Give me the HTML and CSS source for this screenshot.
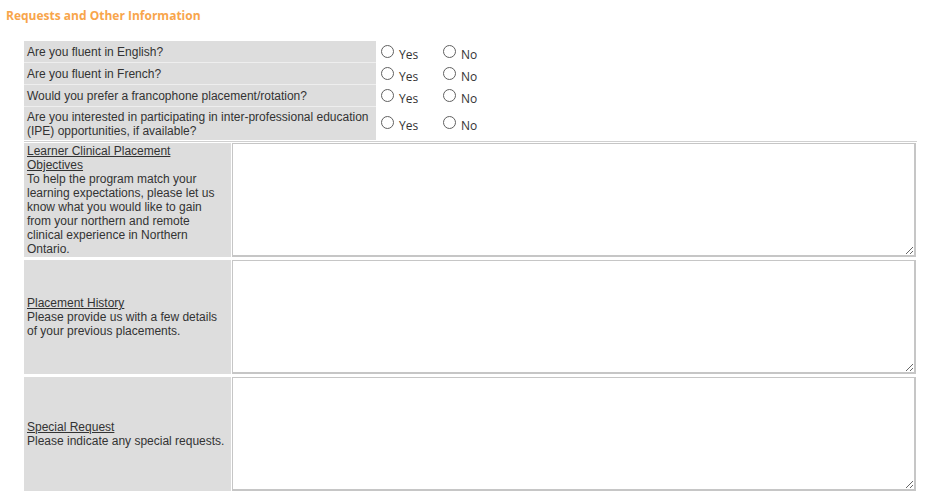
FILE: index.html
```html
<!DOCTYPE html>
<html>
<head>
<meta charset="utf-8">
<link rel="stylesheet" href="styles.css">
</head>
<body>
<h2 class="section-title">Requests and Other Information</h2>
<div class="questions">
  <div class="q-label">Are you fluent in English?</div>
  <div class="q-answer"><span class="opt"><span class="radio"></span>Yes</span><span class="opt"><span class="radio"></span>No</span></div>
  <div class="q-label">Are you fluent in French?</div>
  <div class="q-answer"><span class="opt"><span class="radio"></span>Yes</span><span class="opt"><span class="radio"></span>No</span></div>
  <div class="q-label">Would you prefer a francophone placement/rotation?</div>
  <div class="q-answer"><span class="opt"><span class="radio"></span>Yes</span><span class="opt"><span class="radio"></span>No</span></div>
  <div class="q-label tall">Are you interested in participating in inter-professional education (IPE) opportunities, if available?</div>
  <div class="q-answer tall"><span class="opt"><span class="radio"></span>Yes</span><span class="opt"><span class="radio"></span>No</span></div>
</div>
<div class="texts">
  <div class="t-label"><div><span class="u">Learner Clinical Placement Objectives</span><br>To help the program match your learning expectations, please let us know what you would like to gain from your northern and remote clinical experience in Northern Ontario.</div></div>
  <div class="t-field"><textarea></textarea></div>
  <div class="t-label"><div><span class="u">Placement History</span><br>Please provide us with a few details of your previous placements.</div></div>
  <div class="t-field"><textarea></textarea></div>
  <div class="t-label"><div><span class="u">Special Request</span><br>Please indicate any special requests.</div></div>
  <div class="t-field"><textarea></textarea></div>
</div>
</body>
</html>
```

FILE: styles.css
```css
html, body {
  margin: 0;
  padding: 0;
  background: #fff;
}
body {
  font-family: "Liberation Sans", Arial, sans-serif;
  font-size: 12px;
  color: #333;
}
.section-title {
  margin: 0;
  padding: 8px 0 0 6px;
  height: 33px;
  box-sizing: border-box;
  font-family: "Open Sans", sans-serif;
  font-size: 12px;
  font-weight: 700;
  color: #f8a54b;
  line-height: 16px;
}
.questions {
  margin-left: 24px;
  width: 893px;
  display: grid;
  grid-template-columns: 352px 1fr;
  border-bottom: 1px solid #d0d0d0;
  padding-bottom: 1px;
  margin-top: 8px;
}
.q-label {
  background: #ddd;
  height: 21px;
  padding: 0 3px;
  border-bottom: 1px solid #eee;
  display: flex;
  align-items: center;
  line-height: 14px;
}
.q-label.tall {
  height: 33px;
  border-bottom: none;
}
.q-answer {
  height: 21px;
  padding-left: 5px;
  display: flex;
  align-items: flex-end;
  font-family: "Open Sans", sans-serif;
  font-size: 12px;
  color: #333;
  padding-bottom: 1px;
}
.q-answer.tall {
  height: 33px;
  align-items: center;
  padding-top: 2px;
  box-sizing: border-box;
}
.opt {
  display: inline-flex;
  align-items: flex-end;
  width: 62px;
  line-height: 14px;
}
.radio {
  display: inline-block;
  width: 11px;
  height: 11px;
  border: 1px solid #606060;
  border-radius: 50%;
  margin-right: 5px;
  margin-bottom: 4px;
  flex: none;
}
.texts {
  margin-left: 24px;
  width: 893px;
  display: grid;
  grid-template-columns: 207px 1fr;
  column-gap: 1px;
  row-gap: 3px;
  margin-top: 1px;
}
.t-label {
  background: #ddd;
  height: 114px;
  padding: 0 3px;
  display: flex;
  align-items: center;
  line-height: 14px;
  box-sizing: border-box;
}
.t-label .u {
  text-decoration: underline;
}
.t-field {
  padding-right: 1px;
}
.t-field textarea {
  display: block;
  width: 684px;
  height: 114px;
  box-sizing: border-box;
  margin: 0;
  border: 1px solid #c6c6c6;
  border-right: 2px solid #c6c6c6;
  border-bottom: 2px solid #c6c6c6;
  background: #fff;
  resize: vertical;
  font-family: "Liberation Sans", Arial, sans-serif;
  font-size: 12px;
}
```
